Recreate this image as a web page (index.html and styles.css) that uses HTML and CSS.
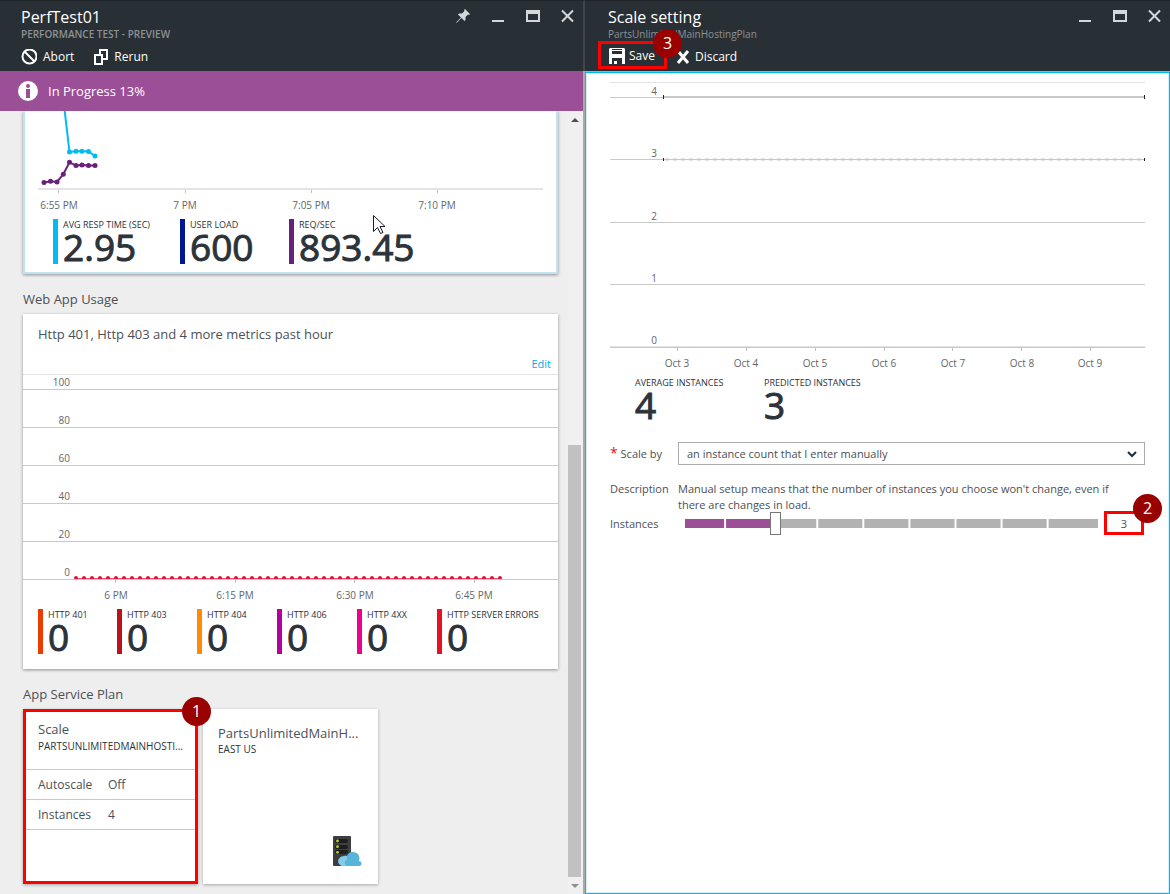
FILE: index.html
```html
<!DOCTYPE html>
<html lang="en">
<head>
<meta charset="utf-8">
<title>PerfTest01 - Scale setting</title>
<link rel="stylesheet" href="styles.css">
</head>
<body>
<main class="portal">
  <section class="blade blade-test">
    <header class="blade-head">
      <div class="head-top">
        <div class="titles">
          <h1>PerfTest01</h1>
          <p class="subtitle">PERFORMANCE TEST - PREVIEW</p>
        </div>
        <div class="window-tools">
          <button class="tool" aria-label="Pin"><svg width="14" height="14" viewBox="0 0 14 14"><path fill="#d6d7d8" d="M9 0 L14 5 L13 6 L12 5.500 L9.500 8 L9.500 11 L8.500 12 L5.500 9 L1 13.500 L0 14 L0.500 13 L5 8.500 L2 5.500 L3 4.500 L6 4.500 L8.500 2 L8 1Z"/></svg></button>
          <button class="tool" aria-label="Minimize"><svg width="14" height="14" viewBox="0 0 14 14"><path fill="#d6d7d8" d="M1 11h12v2H1z"/></svg></button>
          <button class="tool" aria-label="Maximize"><svg width="14" height="14" viewBox="0 0 14 14"><path fill="#d6d7d8" fill-rule="evenodd" d="M0 1h14v12H0zM2 5v6h10V5z"/></svg></button>
          <button class="tool" aria-label="Close"><svg width="14" height="14" viewBox="0 0 14 14"><path stroke="#d6d7d8" stroke-width="2" d="M1 1.500l11 11M12 1.500L1 12.500"/></svg></button>
        </div>
      </div>
      <div class="commands">
        <button class="command"><svg width="16" height="16" viewBox="0 0 16 16"><g fill="none" stroke="#fff" stroke-width="2"><circle cx="8.500" cy="7.500" r="7"/><path d="M3.500 2.500l10 10"/></g></svg>Abort</button>
        <button class="command"><svg width="14" height="16" viewBox="0 0 14 16"><g fill="none" stroke="#fff" stroke-width="2"><path d="M1 6h7v9H1zM6 5V1h7v9H9"/></g></svg>Rerun</button>
      </div>
    </header>
    <div class="status">
      <svg width="20" height="20" viewBox="0 0 20 20"><circle cx="10" cy="10" r="10" fill="#fff"/><circle cx="10" cy="5" r="2" fill="#9b4f96"/><path fill="#9b4f96" d="M8 8h4v9H8z"/></svg>
      <span>In Progress 13%</span>
    </div>
    <div class="scroll-area">
      <div class="content">
        <article class="card card-selected">
          <svg class="chart" viewBox="0 0 531 104" role="img" aria-label="Response time and requests">
            <defs>
              <marker id="dot-blue" markerWidth="6" markerHeight="6" refX="3" refY="3" markerUnits="userSpaceOnUse"><circle cx="3" cy="3" r="2.500" fill="#00bcf2"/></marker>
              <marker id="dot-purple" markerWidth="6" markerHeight="6" refX="3" refY="3" markerUnits="userSpaceOnUse"><circle cx="3" cy="3" r="2.500" fill="#68217a"/></marker>
            </defs>
            <path class="axis-light" d="M13 77h505v2H13z"/>
            <path class="tick" d="M33 79h1v3h-1zM160 79h1v3h-1zM286 79h1v3h-1zM412 79h1v3h-1z"/>
            <polyline fill="none" stroke="#00bcf2" stroke-width="2" marker-mid="url(#dot-blue)" marker-end="url(#dot-blue)" points="39,-6 44.500,41 51,40.300 57,40.300 63.500,40.500 70,45"/>
            <polyline fill="none" stroke="#68217a" stroke-width="2" marker-start="url(#dot-purple)" marker-mid="url(#dot-purple)" marker-end="url(#dot-purple)" points="19,71.500 25.500,70.300 32,71 38.300,63.300 44.500,51.300 51,54.600 57,54 63.500,54.600 70,54.600"/>
            <g class="axis-text middle"><text x="34" y="98">6:55 PM</text><text x="160" y="98">7 PM</text><text x="286" y="98">7:05 PM</text><text x="412" y="98">7:10 PM</text></g>
          </svg>
          <dl class="metrics metrics-load">
            <div class="metric bar-cyan"><dt>AVG RESP TIME (SEC)</dt><dd>2.95</dd></div>
            <div class="metric bar-navy"><dt>USER LOAD</dt><dd>600</dd></div>
            <div class="metric bar-purple"><dt>REQ/SEC</dt><dd>893.45</dd></div>
          </dl>
          <svg class="pointer" width="13" height="20" viewBox="0 0 13 20"><path fill="#fff" stroke="#1a1a2a" d="M.5.500v16l4-4 3 6 2.500-1-3-6h5z"/></svg>
        </article>

        <h2>Web App Usage</h2>
        <article class="card usage">
          <h3>Http 401, Http 403 and 4 more metrics past hour</h3>
          <a class="edit" href="#">Edit</a>
          <svg class="chart" viewBox="0 0 535 227" role="img" aria-label="Http errors past hour">
            <path class="axis-light" d="M0 0h535v1H0z"/>
            <path class="grid" d="M0 15h535v1H0zM0 53h535v1H0zM0 91h535v1H0zM0 129h535v1H0zM0 167h535v1H0z"/>
            <path class="tick" d="M92 206h1v3h-1zM212 206h1v3h-1zM331 206h1v3h-1zM451 206h1v3h-1z"/>
            <path stroke="#e8566f" d="M53 204.500h425"/>
            <path stroke="#dc143c" stroke-width="4" stroke-linecap="round" stroke-dasharray="0 8" d="M53 204h425"/>
            <path fill="#fff" d="M50 205h432v1H50z"/>
            <path class="grid" d="M0 205h535v1H0z"/>
            <g class="axis-text end"><text x="47" y="12">100</text><text x="47" y="50">80</text><text x="47" y="88">60</text><text x="47" y="126">40</text><text x="47" y="164">20</text><text x="47" y="202">0</text></g>
            <g class="axis-text middle"><text x="93" y="225">6 PM</text><text x="212" y="225">6:15 PM</text><text x="332" y="225">6:30 PM</text><text x="451" y="225">6:45 PM</text></g>
          </svg>
          <dl class="metrics metrics-http">
            <div class="metric bar-orange"><dt>HTTP 401</dt><dd>0</dd></div>
            <div class="metric bar-darkred"><dt>HTTP 403</dt><dd>0</dd></div>
            <div class="metric bar-amber"><dt>HTTP 404</dt><dd>0</dd></div>
            <div class="metric bar-violet"><dt>HTTP 406</dt><dd>0</dd></div>
            <div class="metric bar-pink"><dt>HTTP 4XX</dt><dd>0</dd></div>
            <div class="metric bar-red"><dt>HTTP SERVER ERRORS</dt><dd>0</dd></div>
          </dl>
        </article>

        <h2>App Service Plan</h2>
        <div class="tiles">
          <article class="tile tile-scale">
            <h3>Scale</h3>
            <p class="tile-sub">PARTSUNLIMITEDMAINHOSTI...</p>
            <table class="facts">
              <tr><th scope="row">Autoscale</th><td>Off</td></tr>
              <tr><th scope="row">Instances</th><td>4</td></tr>
            </table>
            <span class="badge">1</span>
          </article>
          <article class="tile tile-plan">
            <h3>PartsUnlimitedMainH...</h3>
            <p class="tile-sub">EAST US</p>
            <svg class="plan-icon" width="30" height="30" viewBox="0 0 30 30"><rect width="18" height="30" rx="1" fill="#3e3e3e"/><g fill="#1e1e1e"><rect x="2" y="3" width="13" height="4" rx="2"/><rect x="2" y="9" width="13" height="4" rx="2"/><rect x="2" y="14" width="13" height="4" rx="2"/></g><g fill="#b8d432"><circle cx="4.500" cy="5" r="1.400"/><circle cx="4.500" cy="10.700" r="1.400"/><circle cx="4.500" cy="16.300" r="1.400"/></g><path fill="#59b4d9" d="M10 30a4.500 4.500 0 0 1 0-9.500 4 4 0 0 1 4-.5 6.500 6.500 0 0 1 12.500 2.500l-.5 2.500a2.600 2.600 0 0 1 1 5z"/><path fill="#83cbe8" d="M10 30a4.500 4.500 0 0 1 0-9.500 4 4 0 0 1 4.500-.2c-1 1.500-.5 3-.5 3.200-3 1.500-2.500 5-.5 6.500z"/></svg>
          </article>
        </div>
      </div>
      <div class="scrollbar" aria-hidden="true">
        <span class="arrow arrow-up"></span>
        <span class="thumb"></span>
        <span class="arrow arrow-down"></span>
      </div>
    </div>
  </section>

  <section class="blade blade-scale">
    <header class="blade-head">
      <div class="head-top">
        <div class="titles">
          <h1>Scale setting</h1>
          <p class="subtitle subtitle-plan">PartsUnlimitedMainHostingPlan</p>
        </div>
        <div class="window-tools">
          <button class="tool" aria-label="Minimize"><svg width="14" height="14" viewBox="0 0 14 14"><path fill="#d6d7d8" d="M1 11h12v2H1z"/></svg></button>
          <button class="tool" aria-label="Maximize"><svg width="14" height="14" viewBox="0 0 14 14"><path fill="#d6d7d8" fill-rule="evenodd" d="M0 1h14v12H0zM2 5v6h10V5z"/></svg></button>
          <button class="tool" aria-label="Close"><svg width="14" height="14" viewBox="0 0 14 14"><path stroke="#d6d7d8" stroke-width="2" d="M1 1.500l11 11M12 1.500L1 12.500"/></svg></button>
        </div>
      </div>
      <div class="commands">
        <div class="save-mark">
          <button class="command"><svg width="16" height="16" viewBox="0 0 16 16"><path fill="#fff" fill-rule="evenodd" d="M1 0h14l1 1v15H0V1zM3 1v5h10V1zM3 10v6h10v-6z"/><path fill="#fff" d="M3 2h10v1H3zM5 13h3v3H5z"/></svg>Save</button>
          <span class="badge">3</span>
        </div>
        <button class="command discard"><svg width="14" height="14" viewBox="0 0 14 14"><path stroke="#fff" stroke-width="3" d="M2 1l10 12M12 1L2 13"/></svg>Discard</button>
      </div>
    </header>
    <div class="scale-body">
      <svg class="chart" viewBox="0 0 535 288" role="img" aria-label="Instances over time">
        <path class="axis-light" d="M0 0h535v1H0zM0 264h535v1H0z"/>
        <path class="grid" d="M0 15h535v1H0zM0 77h535v1H0zM0 140h535v1H0zM0 202h535v1H0zM0 265h535v1H0z"/>
        <path class="tick" d="M67 266h1v3h-1zM136 266h1v3h-1zM205 266h1v3h-1zM274 266h1v3h-1zM342 266h1v3h-1zM411 266h1v3h-1zM480 266h1v3h-1z"/>
        <path class="grid" d="M54 14h481v2H54z"/>
        <path stroke="#e2e2e2" stroke-width="3" stroke-dasharray="4 4" d="M55 77.500h480"/>
        <path class="grid" d="M54 77h481v1H54z"/>
        <path fill="#222" d="M53 13h1v4h-1zM534 13h1v4h-1zM53 76h1v3h-1zM534 76h1v3h-1z"/>
        <g class="axis-text end"><text x="47" y="13">4</text><text x="47" y="75">3</text><text x="47" y="138">2</text><text x="47" y="200">1</text><text x="47" y="262">0</text></g>
        <g class="axis-text middle"><text x="67" y="285">Oct 3</text><text x="136" y="285">Oct 4</text><text x="205" y="285">Oct 5</text><text x="274" y="285">Oct 6</text><text x="343" y="285">Oct 7</text><text x="412" y="285">Oct 8</text><text x="480" y="285">Oct 9</text></g>
      </svg>
      <dl class="metrics metrics-instances">
        <div class="metric"><dt>AVERAGE INSTANCES</dt><dd>4</dd></div>
        <div class="metric"><dt>PREDICTED INSTANCES</dt><dd>3</dd></div>
      </dl>
      <form class="scale-form">
        <label for="scale-by"><span class="required">*</span> Scale by</label>
        <div class="select-wrap">
          <select id="scale-by"><option>an instance count that I enter manually</option></select>
          <svg class="chevron" width="10" height="7" viewBox="0 0 10 7"><path fill="none" stroke="#222b33" stroke-width="2" d="M1 1l4 4 4-4"/></svg>
        </div>
        <span class="desc-label">Description</span>
        <p class="desc">Manual setup means that the number of instances you choose won't change, even if there are changes in load.</p>
        <label for="instances">Instances</label>
        <div class="slider-row">
          <input id="instances" class="slider" type="range" min="1" max="10" value="3">
          <div class="count-mark">
            <input class="count" type="text" value="3" aria-label="Instance count">
            <span class="badge">2</span>
          </div>
        </div>
      </form>
    </div>
  </section>
</main>
</body>
</html>
```
FILE: styles.css
```css
* { box-sizing: border-box; }

body, h1, h2, h3, p, dl, dd { margin: 0; }

body {
  font: 12px/16px "Segoe UI", "Open Sans", "Noto Sans", sans-serif;
  color: #4b5056;
  background: #eee;
}

button, input, select { font: inherit; color: inherit; }

.portal {
  display: grid;
  grid-template-columns: 1fr 1fr;
  min-height: 100vh;
}

.blade { display: flex; flex-direction: column; min-width: 0; }
.blade-test { border-right: 2px solid #aaa; }

.blade-head {
  min-height: 71px;
  background: #293035;
  border-top: 1px solid #1f2428;
  color: #fff;
}
.blade-test .blade-head { margin-right: -2px; border-right: 2px solid #40464b; }
.head-top { display: flex; justify-content: space-between; padding: 4px 8px 0 21px; height: 40px; }
.blade-scale .head-top { padding-left: 23px; }
h1 { font-size: 16px; line-height: 24px; font-weight: 400; }
.subtitle { font-size: 10px; line-height: 11px; font-weight: 600; color: #8d9194; }
.subtitle-plan { font-weight: 400; }

.window-tools { display: flex; gap: 21px; padding-top: 4px; align-items: flex-start; }
.tool { display: flex; padding: 0; border: 0; background: none; }

.commands { display: flex; gap: 20px; height: 28px; align-items: center; padding: 3px 0 0 21px; }
.command {
  display: flex;
  align-items: center;
  gap: 6px;
  padding: 0;
  border: 0;
  background: none;
  color: #fff;
  line-height: 16px;
}
.blade-scale .commands { padding: 0 0 0 13px; gap: 9px; }
.save-mark { position: relative; border: 3px solid #f00; height: 28px; padding: 4px 9px 0 8px; }
.save-mark .command { gap: 4px; }
.discard { gap: 5px; padding-top: 3px; }

.badge {
  position: absolute;
  z-index: 1;
  width: 29px;
  height: 29px;
  border-radius: 50%;
  background: #900;
  color: #fff;
  font-size: 16px;
  line-height: 29px;
  text-align: center;
}
.save-mark .badge { right: -18px; top: -15px; }

.status {
  display: flex;
  align-items: center;
  gap: 10px;
  height: 40px;
  padding-left: 18px;
  background: #9b4f96;
  color: #fff;
  font-size: 13px;
}

.scroll-area { display: flex; flex: 1; }
.content { flex: 1; min-width: 0; padding: 0 10px 10px 23px; }
.scrollbar {
  display: flex;
  flex-direction: column;
  align-items: center;
  width: 15px;
  padding: 7px 2px 6px 0;
  background: #f0f0f0;
}
.arrow { border: 4px solid transparent; }
.arrow-up { border-top-width: 0; border-bottom-color: #505050; }
.arrow-down { border-bottom-width: 0; border-top-color: #909090; }
.thumb { width: 13px; height: 432px; margin: auto 0 7px; background: #c1c1c1; }

.card { position: relative; background: #fff; box-shadow: 0 1px 3px rgba(0, 0, 0, .4); }
.card-selected { border: 2px solid #bfe3f5; border-top: 0; clip-path: inset(0 -4px -4px -4px); }
.chart { display: block; width: 100%; height: auto; overflow: hidden; }

.axis-light { fill: #e3e3e3; }
.grid { fill: #c8c8c8; }
.tick { fill: #c0c0c0; }
.axis-text { font-size: 10px; fill: #62666a; }
.middle { text-anchor: middle; }
.end { text-anchor: end; }

.metrics { display: grid; }
.metric { border-left: 5px solid transparent; padding-left: 5px; white-space: nowrap; }
.metric dt { font-size: 9px; line-height: 11px; color: #2c333a; }
.metric dd { font-size: 37px; line-height: 34px; color: #2c333a; -webkit-text-stroke: 1px #2c333a; }
.metrics-load { grid-template-columns: 127px 109px 1fr; padding: 4px 28px 8px; }
.metrics-http { grid-template-columns: 79px repeat(4, 80px) 1fr; padding: 8px 15px 15px; }
.metrics-instances { grid-template-columns: 129px 1fr; padding: 7px 15px 0; }

.bar-cyan { border-color: #00bcf2; }
.bar-navy { border-color: #00188f; }
.bar-purple { border-color: #68217a; }
.bar-orange { border-color: #eb3c00; }
.bar-darkred { border-color: #ba141a; }
.bar-amber { border-color: #ff8c00; }
.bar-violet { border-color: #b4009e; }
.bar-pink { border-color: #ec008c; }
.bar-red { border-color: #e81123; }

.pointer { position: absolute; left: 348px; top: 104px; }

h2 { font-size: 13px; line-height: 20px; font-weight: 400; padding: 15px 0 5px; }
h3 { font-size: 13px; line-height: 20px; font-weight: 400; }
.usage h3 { padding: 10px 15px 0; }
.edit {
  display: block;
  padding: 12px 7px 2px;
  text-align: right;
  font-size: 11px;
  color: #00abec;
  text-decoration: none;
}

.tiles { display: flex; gap: 5px; }
.tile { position: relative; width: 175px; height: 175px; background: #fff; box-shadow: 0 1px 3px rgba(0, 0, 0, .3); }
.tile h3, .tile-sub { white-space: nowrap; }
.tile-sub { font-size: 10px; line-height: 13px; color: #2c333a; }
.tile-scale { border: 3px solid #f00; }
.tile-scale h3 { padding: 0 12px; margin-top: 7px; }
.tile-scale .tile-sub { margin: 1px 8px 16px 12px; }
.tile-plan { padding: 14px 16px 0 15px; }
.tile-scale .badge { right: -16px; top: -15px; }
.facts { width: 100%; font-size: 12px; border-collapse: collapse; border-top: 1px solid #c8c8c8; }
.facts th, .facts td { height: 30px; padding: 0; border-bottom: 1px solid #c8c8c8; text-align: left; font-weight: 400; }
.facts th { width: 82px; padding-left: 12px; }
.plan-icon { position: absolute; right: 15px; bottom: 18px; }

.scale-body {
  flex: 1;
  margin-top: 1px;
  padding: 9px 24px 20px 24px;
  background: #fff;
  border: 1px solid #00b7ee;
  box-shadow: inset 0 0 0 1px #d2effa, 0 -1px #aaa;
}

.scale-form {
  display: grid;
  grid-template-columns: 68px 1fr;
  margin-top: 20px;
  font-size: 11px;
}
.scale-form label { white-space: nowrap; align-self: center; }
.required { color: #e81123; font-size: 14px; }
.select-wrap { position: relative; }
.select-wrap select {
  display: block;
  width: 100%;
  height: 23px;
  padding: 1px 8px 0;
  border: 1px solid #aaa;
  border-radius: 0;
  background: #fff;
  appearance: none;
}
.chevron { position: absolute; right: 8px; top: 9px; }
.desc-label, .desc { margin-top: 16px; }
.desc { padding-right: 20px; }
.slider-row { display: flex; align-items: center; gap: 6px; height: 24px; margin-top: -2px; padding: 0 1px; }
.slider {
  flex: 1;
  min-width: 0;
  height: 23px;
  margin: 0;
  appearance: none;
  background:
    linear-gradient(90deg, #fff 6px, transparent 6px),
    linear-gradient(270deg, #b2b2b2 20px, transparent 20px),
    linear-gradient(90deg, transparent calc(100% - 2px), #fff calc(100% - 2px)),
    linear-gradient(90deg, #9b4f96 23%, #b2b2b2 23%);
  background-size: 100% 9px, 100% 9px, 11% 9px, 100% 9px;
  background-position: 0 center, 0 center, 1px center, 0 center;
  background-repeat: no-repeat, no-repeat, repeat-x, no-repeat;
}
.slider::-webkit-slider-thumb {
  appearance: none;
  width: 11px;
  height: 23px;
  border: 1px solid #777;
  background: #fff;
}
.count-mark { position: relative; width: 40px; height: 24px; border: 3px solid #f00; }
.count { display: block; width: 100%; height: 18px; padding: 0; border: 0; background: #fff; text-align: center; }
.count-mark .badge { right: -21px; top: -20px; }
```
